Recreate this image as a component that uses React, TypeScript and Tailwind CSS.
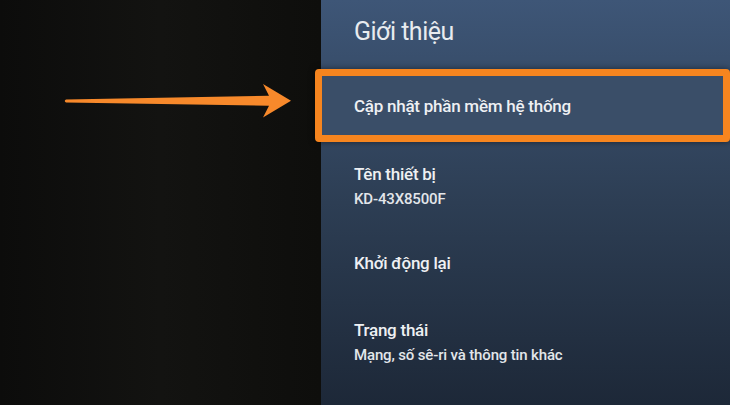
import React from 'react'

const font = { fontFamily: 'Roboto, "Noto Sans", sans-serif' }

function Arrow() {
  return (
    <svg
      className="pointer-events-none absolute left-0 top-0"
      width="320"
      height="200"
      viewBox="0 0 320 200"
      aria-hidden="true"
    >
      <path
        d="M66 99.6 L269 95.8 L263 84 L291 100.8 L263 117.5 L269 105.8 L66 102.6 Q63.5 101.1 66 99.6 Z"
        fill="#f7892b"
      />
    </svg>
  )
}

function Row({ title, sub, h }: { title: string; sub?: string; h: string }) {
  return (
    <div className={`flex flex-col justify-center pl-[33px] ${h}`}>
      <div className="text-[17px] font-medium leading-[22px] tracking-[-0.25px] text-[#eef0f3]">{title}</div>
      {sub && (
        <div className="mt-[5px] text-[15px] font-medium leading-[19px] tracking-[-0.15px] text-[#e3e6ea]">{sub}</div>
      )}
    </div>
  )
}

export default function App() {
  return (
    <div className="relative flex h-[405px] w-[730px] overflow-hidden bg-[#11110f]" style={font}>
      <div className="w-[321px] shrink-0 bg-gradient-to-r from-[#0c0c0b] via-[#131311] to-[#0e0e0c]" />
      <div className="flex flex-1 flex-col bg-gradient-to-b from-[#3e5677] via-[#2d3e54] to-[#1d2838]">
        <div className="h-[69px] pl-[33px] pt-[16px] text-[25px] leading-[32px] tracking-[-0.5px] text-[#e8ebef]">
          Giới thiệu
        </div>
        <div className="-ml-[6px] flex h-[73px] items-center rounded-[4px] border-[7px] border-[#f6851f] bg-[#3a4e68] pl-[32px] shadow-[0_0_6px_rgba(0,0,0,0.5)]">
          <span className="text-[17px] font-medium leading-[22px] tracking-[-0.25px] text-[#eef0f3]">
            Cập nhật phần mềm hệ thống
          </span>
        </div>
        <Row title="Tên thiết bị" sub="KD-43X8500F" h="h-[88px]" />
        <Row title="Khởi động lại" h="h-[66px]" />
        <Row title="Trạng thái" sub="Mạng, số sê-ri và thông tin khác" h="h-[92px]" />
      </div>
      <Arrow />
    </div>
  )
}
